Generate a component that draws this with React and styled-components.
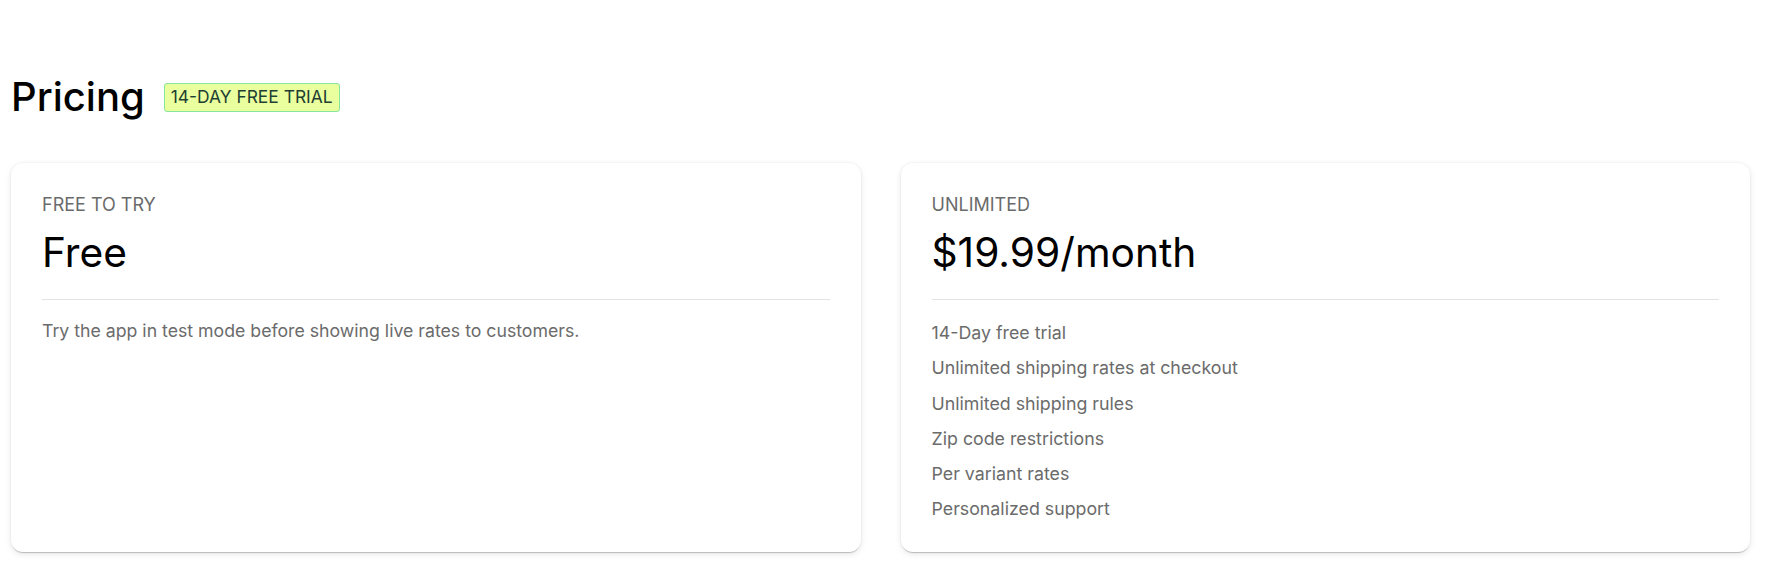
import React from "react";
import styled, { createGlobalStyle } from "styled-components";

const Global = createGlobalStyle`
  html, body { margin: 0; padding: 0; background: #ffffff; }
  body { font-family: Inter, "Noto Sans", Arial, sans-serif; color: #000; }
  * { box-sizing: border-box; }
`;

const Page = styled.div`
  padding: 73px 17px 24px 11px;
`;

const Header = styled.div`
  display: flex;
  align-items: center;
  gap: 19px;
  margin-bottom: 42px;
`;

const Title = styled.h1`
  margin: 0;
  font-size: 40px;
  line-height: 48px;
  font-weight: 500;
  color: #000;
`;

const Badge = styled.span`
  display: inline-flex;
  align-items: center;
  height: 29px;
  padding: 0 6px;
  border: 1px solid #86e69c;
  border-radius: 3px;
  background: #eaff9d;
  color: #1d4033;
  font-size: 17.4px;
  line-height: 20px;
`;

const Cards = styled.div`
  display: grid;
  grid-template-columns: 1fr 1fr;
  gap: 40px;
`;

const Card = styled.section`
  background: #fff;
  border-radius: 12px;
  padding: 32px 31px 33px;
  box-shadow: 0 0 0 1px rgba(0, 0, 0, 0.025), 0 2px 1px -1px rgba(0, 0, 0, 0.2),
    0 2px 6px rgba(0, 0, 0, 0.1);
`;

const Label = styled.div`
  font-size: 18px;
  line-height: 20px;
  color: #6b6b6b;
  text-transform: uppercase;
`;

const Price = styled.div`
  margin-top: 14px;
  font-size: 40.7px;
  line-height: 48px;
  color: #000;
`;

const Divider = styled.hr`
  margin: 22px 0 0;
  border: 0;
  border-top: 1px solid #e3e3e3;
`;

const Text = styled.p`
  margin: 21px 0 0;
  font-size: 17.7px;
  line-height: 20px;
  color: #6b6b6b;
`;

const List = styled.ul`
  list-style: none;
  margin: 23px 0 0;
  padding: 0;
  display: flex;
  flex-direction: column;
  gap: 15.3px;
`;

const Item = styled.li`
  font-size: 17.8px;
  line-height: 20px;
  color: #6b6b6b;
`;

const features = [
  "14-Day free trial",
  "Unlimited shipping rates at checkout",
  "Unlimited shipping rules",
  "Zip code restrictions",
  "Per variant rates",
  "Personalized support",
];

export default function App() {
  return (
    <>
      <Global />
      <Page>
        <Header>
          <Title>Pricing</Title>
          <Badge>14-DAY FREE TRIAL</Badge>
        </Header>
        <Cards>
          <Card>
            <Label>Free to try</Label>
            <Price>Free</Price>
            <Divider />
            <Text>Try the app in test mode before showing live rates to customers.</Text>
          </Card>
          <Card>
            <Label>Unlimited</Label>
            <Price>$19.99/month</Price>
            <Divider />
            <List>
              {features.map((f) => (
                <Item key={f}>{f}</Item>
              ))}
            </List>
          </Card>
        </Cards>
      </Page>
    </>
  );
}
